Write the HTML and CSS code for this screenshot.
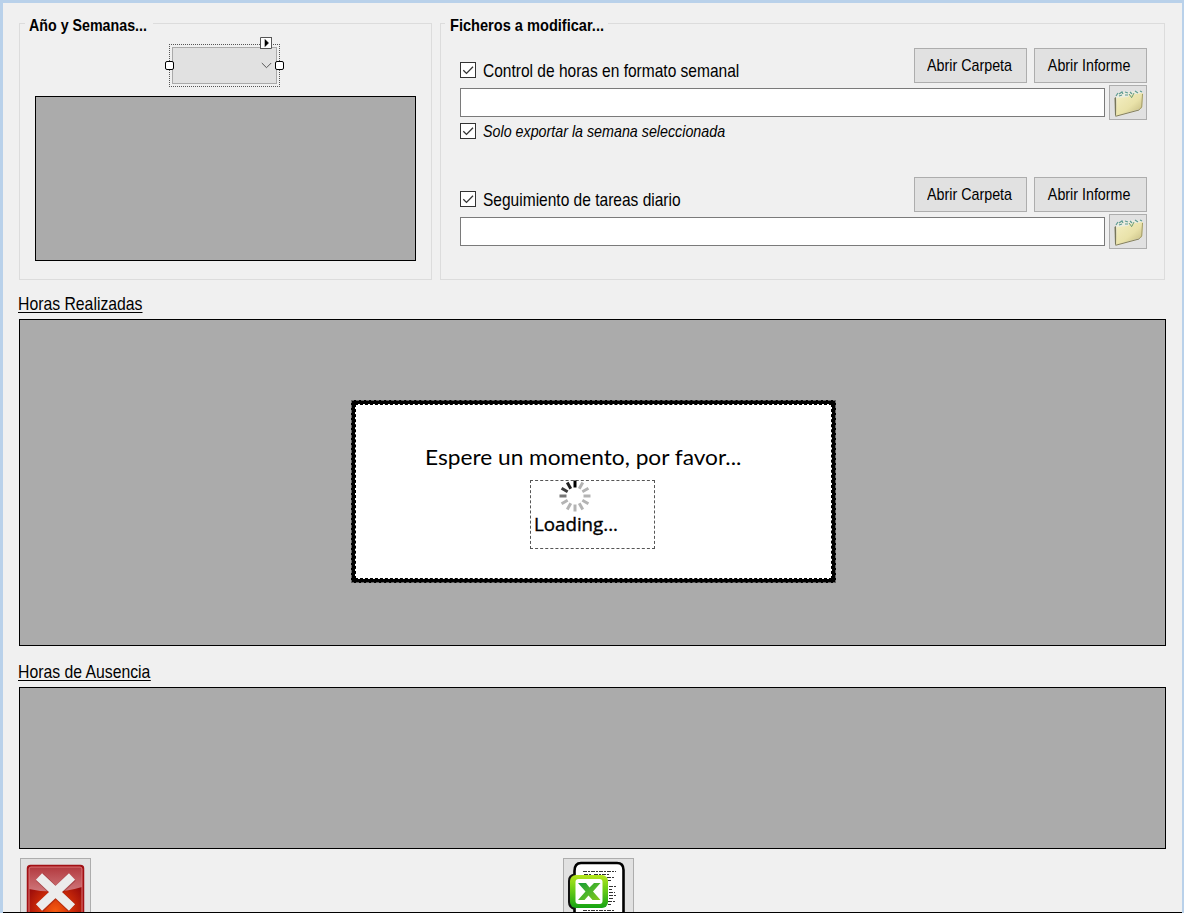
FILE: index.html
```html
<!DOCTYPE html>
<html lang="es">
<head>
<meta charset="utf-8">
<title>Control de horas</title>
<link rel="stylesheet" href="styles.css">
</head>
<body>
<svg class="defs" width="0" height="0" aria-hidden="true">
  <defs>
    <linearGradient id="paper" x1="0" y1="0" x2="1" y2="1"><stop offset="0" stop-color="#f4efc4"/><stop offset=".55" stop-color="#e9e2a9"/><stop offset="1" stop-color="#bdb379"/></linearGradient>
    <linearGradient id="gloss" x1="0" y1="0" x2="0" y2="1"><stop offset="0" stop-color="#b33a3f"/><stop offset="1" stop-color="#cf777b"/></linearGradient>
    <radialGradient id="ember" cx=".5" cy=".78" r=".6"><stop offset="0" stop-color="#f45a10"/><stop offset=".5" stop-color="#cf2d08"/><stop offset="1" stop-color="#96090b"/></radialGradient>
    <linearGradient id="lime" x1="0" y1="0" x2="0" y2="1"><stop offset="0" stop-color="#b5e61d"/><stop offset=".4" stop-color="#72d016"/><stop offset="1" stop-color="#15a315"/></linearGradient>
    <linearGradient id="xmark" x1="0" y1="0" x2="1" y2="1"><stop offset="0" stop-color="#159c35"/><stop offset=".5" stop-color="#4cb52a"/><stop offset="1" stop-color="#86c91d"/></linearGradient>
    <symbol id="folder" viewBox="0 0 32 30">
      <path d="M3 9 5 5 9 4 25 3 29 4 29 12 4 14Z" fill="#eceddf"/>
      <path d="M3 8 5 5M6 6 9 4 10 6M12 4 15 5M17 4 19 6M22 3 25 5M27 3 29 4M6 8 9 7M12 7 15 7" fill="none" stroke="#5f9b93" stroke-width="1.200"/>
      <path d="M1.500 10 3 9 4 27 2 28Z" fill="#77765a"/>
      <path d="M3.500 10 15 9 16.500 7 30 5 29 20 27 21 3 28Z" fill="url(#paper)"/>
      <path d="M2.500 28.300 26 22" fill="none" stroke="#85805a"/>
      <path d="M29.500 6 28.700 19 26 22" fill="none" stroke="#a39c68"/>
      <path d="M16 6 19 10M21 5 19 9" fill="none" stroke="#6c9e77"/>
    </symbol>
    <symbol id="tick" viewBox="0 0 14 14"><path d="M2.300 7.200 5.500 10.400 12 3.800" fill="none" stroke="#333" stroke-width="1.300"/></symbol>
  </defs>
</svg>
<main class="window">
  <div class="groups">
    <section class="group group-weeks">
      <h2 class="legend"><span class="t t-year">Año y Semanas...</span></h2>
      <div class="combo-frame">
        <div class="combo"><svg width="11" height="7" viewBox="0 0 11 7"><path d="M.8 1 5.500 5.700 10.200 1" fill="none" stroke="#555"/></svg></div>
        <i class="handle handle-left"></i><i class="handle handle-right"></i>
        <i class="smart-tag"><svg width="12" height="12" viewBox="0 0 12 12"><path d="M.5 12V.5H12" fill="none" stroke="#555"/><path d="M1 11.500H11.500V1" fill="none" stroke="#555"/><path d="M5 2.500 8.500 6 5 9.500Z" stroke="#000" stroke-width=".6"/></svg></i>
      </div>
      <div class="grid grid-weeks"></div>
    </section>
    <section class="group group-files">
      <h2 class="legend"><span class="t t-files">Ficheros a modificar...</span></h2>
      <div class="file-block">
        <div class="row">
          <label class="check"><span class="box"><svg><use href="#tick"/></svg></span><span class="t t-label">Control de horas en formato semanal</span></label>
          <button class="btn"><span class="t t-btn">Abrir Carpeta</span></button>
          <button class="btn"><span class="t t-btn">Abrir Informe</span></button>
        </div>
        <div class="path-row"><div class="field"></div><button class="btn browse"><svg width="32" height="30"><use href="#folder"/></svg></button></div>
        <label class="check check-sub"><span class="box"><svg><use href="#tick"/></svg></span><span class="t t-sub">Solo exportar la semana seleccionada</span></label>
      </div>
      <div class="file-block">
        <div class="row">
          <label class="check"><span class="box"><svg><use href="#tick"/></svg></span><span class="t t-label">Seguimiento de tareas diario</span></label>
          <button class="btn"><span class="t t-btn">Abrir Carpeta</span></button>
          <button class="btn"><span class="t t-btn">Abrir Informe</span></button>
        </div>
        <div class="path-row"><div class="field"></div><button class="btn browse"><svg width="32" height="30"><use href="#folder"/></svg></button></div>
      </div>
    </section>
  </div>
  <h3 class="heading"><span class="t t-head">Horas Realizadas</span></h3>
  <div class="grid grid-done">
    <div class="dialog">
      <div class="dialog-inner">
        <p class="wait"><span class="t t-wait">Espere un momento, por favor...</span></p>
        <div class="loading">
          <svg class="spinner" width="34" height="34" viewBox="-17 -17 34 34" stroke-width="3" stroke-linecap="butt">
            <g stroke="#b4b4b4">
              <path d="M0-8.500V-15.500" transform="rotate(30)"/><path d="M0-8.500V-15.500" transform="rotate(60)"/><path d="M0-8.500V-15.500" transform="rotate(90)"/><path d="M0-8.500V-15.500" transform="rotate(120)"/><path d="M0-8.500V-15.500" transform="rotate(150)"/><path d="M0-8.500V-15.500" transform="rotate(180)"/><path d="M0-8.500V-15.500" transform="rotate(210)"/><path d="M0-8.500V-15.500" transform="rotate(240)"/>
            </g>
            <path d="M0-8.500V-15.500" transform="rotate(270)" stroke="#777"/><path d="M0-8.500V-15.500" transform="rotate(300)" stroke="#3c3c3c"/><path d="M0-8.500V-15.500" transform="rotate(330)" stroke="#222"/><path d="M0-8.500V-15.500" stroke="#000"/>
          </svg>
          <span class="t t-loading">Loading...</span>
        </div>
      </div>
    </div>
  </div>
  <h3 class="heading heading-absence"><span class="t t-head">Horas de Ausencia</span></h3>
  <div class="grid grid-absence"></div>
  <div class="actions">
    <button class="action"><svg width="69" height="54" viewBox="0 0 69 54">
      <rect x="6.500" y="6.500" width="56" height="58" rx="3" fill="url(#ember)" stroke="#a21015" stroke-width="1.500"/>
      <path d="M8 10Q8 8 10 8H59Q61 8 61 10V28Q35 36 8 30Z" fill="url(#gloss)"/>
      <path d="M8 54V10Q8 8 10 8H59Q61 8 61 10V54" fill="none" stroke="#dd7477"/>
      <path d="M18.500 18 51 49M51 18 18.500 49" stroke="#7b1517" stroke-opacity=".4" stroke-width="10.500"/>
      <path d="M18 17.500 51 48.500M51 17.500 18 48.500" stroke="#ececec" stroke-width="9"/>
    </svg></button>
    <button class="action"><svg width="69" height="54" viewBox="0 0 69 54">
      <path d="M10.500 60V12Q10.500 4 17 4H53Q59.500 4 59.500 11V60" fill="#fff" stroke="#000" stroke-width="2.600"/>
      <path d="M19 12.500H52M30 15.500H45M20 15.500H28M43 18.500H51M44 21.500H47M45 27.500H52M45 30.500H48M45 33.500H51M45 36.500H52M45 39.500H50M44 42.500H51M44 45.500H47M19 51.500H50" stroke="#333" stroke-dasharray="4 1 2 1"/>
      <path d="M11 15.500Q5 16 5 22V43Q5 49 11 50" fill="#111" stroke="#111" stroke-width="2"/>
      <rect x="6" y="16" width="38" height="33" rx="6" fill="url(#lime)"/>
      <rect x="11.500" y="20" width="27" height="25" rx="3" fill="#fff"/>
      <path d="M14 24H22L25.500 28.500 30 24H36.500L29 32.500 36.500 41H28.500L24.500 36.500 20.500 41H14L21.500 32.500Z" fill="url(#xmark)"/>
    </svg></button>
  </div>
</main>
</body>
</html>
```
FILE: styles.css
```css
* { box-sizing: border-box; }
body { margin: 0; width: 1184px; height: 913px; overflow: hidden; background: #b9d1ea; font-family: "Liberation Sans", Arial, sans-serif; color: #000; }
h2, h3, p { margin: 0; font-weight: normal; }
button { font-family: inherit; }
.defs { display: block; position: absolute; }
.window { width: 1179px; height: 913px; margin-left: 3px; padding: 20px 0 0 16px; border-top: 3px solid #b9d1ea; border-bottom: 1px solid #000; background: #f0f0f0; overflow: hidden; }
.t { display: inline-block; white-space: nowrap; transform-origin: 0 50%; }

.groups { display: flex; gap: 8px; }
.group { height: 257px; border: 1px solid #dcdcdc; }
.group-weeks { width: 413px; padding: 0 15px; }
.group-files { width: 725px; padding: 0 17px 0 19px; }
.legend { width: 128px; height: 20px; margin: -9px 0 0 -10px; padding: 1px 0 0 4px; background: #f0f0f0; font-size: 17px; font-weight: bold; line-height: 20px; }
.group-files .legend { width: 163px; margin-left: -15px; padding-left: 5px; }
.t-year { transform: scaleX(.838); }
.t-files { transform: scaleX(.858); }

.combo-frame { position: relative; width: 111px; height: 43px; margin: 9px 0 0 134px; padding: 2px; border: 1px dotted #555; }
.combo { display: flex; justify-content: flex-end; align-items: center; width: 105px; height: 37px; padding-right: 4px; border: 1px solid #aaa; background: #e1e1e1; }
.handle { position: absolute; top: 16px; width: 9px; height: 9px; border: 1px solid #000; border-radius: 2px; background: #fff; }
.handle-left { left: -5px; }
.handle-right { right: -5px; }
.smart-tag { position: absolute; left: 90px; top: -8px; width: 12px; height: 12px; background: #fff; }
.smart-tag svg { display: block; }

.grid { border: 1px solid #000; background: #ababab; }
.grid-weeks { width: 381px; height: 165px; margin-top: 9px; }

.file-block { height: 129px; }
.legend + .file-block { margin-top: 13px; }
.row { display: flex; gap: 7px; height: 35px; }
.check { display: flex; gap: 7px; align-items: center; height: 16px; }
.row .check { flex: 1; margin-top: 14px; }
.box { width: 16px; height: 16px; border: 1px solid #333; background: #fff; }
.box svg { display: block; width: 14px; height: 14px; }
.t-label { padding-top: 2px; font-size: 19px; line-height: 22px; transform: scaleX(.817); }
.t-sub { padding-top: 2px; font-size: 17px; font-style: italic; line-height: 20px; transform: scaleX(.84); }
.btn { width: 113px; height: 35px; padding: 0; border: 1px solid #adadad; background: #e1e1e1; color: #000; font-size: 17px; line-height: 20px; }
.t-btn { margin-left: -2px; transform: scaleX(.84); transform-origin: 50% 50%; }
.path-row { display: flex; gap: 4px; margin-top: 2px; }
.field { width: 645px; height: 29px; margin-top: 3px; border: 1px solid #7a7a7a; background: #fff; }
.browse { width: 38px; height: 35px; }
.browse svg { display: block; margin: 1px 0 0 3px; }
.check-sub { margin-top: 3px; }

.heading { height: 39px; margin-left: -1px; padding-top: 13px; font-size: 19px; line-height: 22px; }
.heading .t { height: 20px; border-bottom: 1px solid #000; }
.t-head { transform: scaleX(.83); }
.heading-absence { height: 41px; padding-top: 15px; }
.grid-done { width: 1147px; height: 327px; padding: 80px 0 0 331px; }
.dialog { width: 485px; height: 183px; padding: 3px; border: 1px dashed #666; background: #000; }
.dialog-inner { width: 477px; height: 175px; padding: 38px 0 0 69px; border: 1px dashed #000; background: #fff; }
.wait { height: 28px; font: 21px/28px Lato, sans-serif; }
.t-wait { transform: scaleX(1.08); }
.loading { width: 125px; height: 69px; margin: 9px 0 0 105px; border: 1px dashed #555; }
.spinner { display: block; margin: -2px 0 0 27px; }
.t-loading { display: block; margin-left: 3px; font: 18px/22px "Open Sans", sans-serif; -webkit-text-stroke: .35px #000; transform: scaleX(1.04); }
.grid-absence { width: 1147px; height: 162px; }
.actions { display: flex; gap: 472px; margin: 9px 0 0 1px; }
.action { width: 71px; height: 71px; flex: none; padding: 0; border: 1px solid #adadad; background: #e1e1e1; }
.action svg { display: block; margin-bottom: 15px; }
```
